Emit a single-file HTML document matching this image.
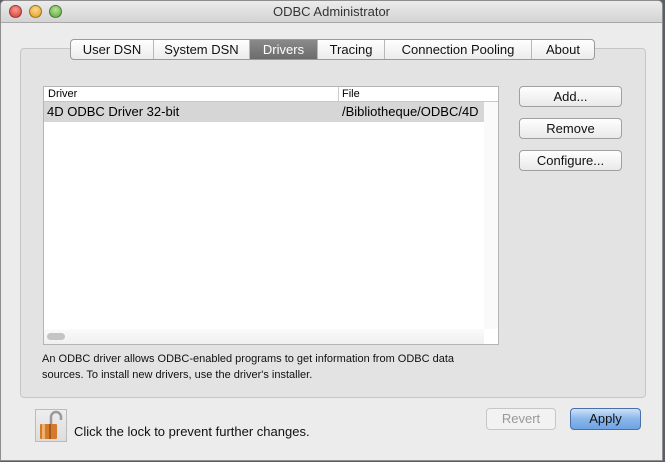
<!DOCTYPE html>
<html><head><style>
*{margin:0;padding:0;box-sizing:border-box}
body{width:665px;height:462px;background:#5a5f66;font-family:"Liberation Sans",sans-serif;position:relative;overflow:hidden}
.win{position:absolute;left:0;top:0;width:663px;height:461px;background:#ececec;border-radius:5px 5px 0 0;border:1px solid #8e8e8e;overflow:hidden}
.title{height:22px;background:linear-gradient(#ececec,#d3d3d3);border-bottom:1px solid #a8a8a8;text-align:center;font-size:13px;line-height:22px;color:#333}
.dot{position:absolute;top:4px;width:13px;height:13px;border-radius:50%;border:1px solid rgba(0,0,0,.35)}
.abs{position:absolute}
.panel{left:19px;top:47px;width:626px;height:350px;background:#e3e3e3;border:1px solid #c6c6c6;border-radius:4px}
.tabs{left:69px;top:38px;height:21px;display:flex;border:1px solid #9a9a9a;border-radius:4px;background:linear-gradient(#fff,#ececec);font-size:13px;overflow:hidden}
.tabs div{text-align:center;line-height:19px;border-right:1px solid #b8b8b8;color:#111}
.tabs div:last-child{border-right:none}
.tabs .sel{background:linear-gradient(#8a8a8a,#6c6c6c);color:#fff}
.tbl{left:42px;top:85px;width:456px;height:259px;background:#fff;border:1px solid #b5b5b5}
.btn{position:absolute;height:21px;border:1px solid #a0a0a0;border-radius:4px;background:linear-gradient(#fff,#e9e9e9);font-size:13px;text-align:center;line-height:19px;color:#111}
</style></head><body>
<div class="win">
<div class="title">ODBC Administrator</div>
<div class="dot" style="left:8px;background:radial-gradient(circle at 50% 35%,#f79a92,#d8372c)"></div>
<div class="dot" style="left:28px;background:radial-gradient(circle at 50% 35%,#fbd98a,#e09a1c)"></div>
<div class="dot" style="left:48px;background:radial-gradient(circle at 50% 35%,#b5e39a,#58a533)"></div>
<div class="abs panel"></div>
<div class="abs tabs"><div style="width:83px">User DSN</div><div style="width:96px">System DSN</div><div class="sel" style="width:68px">Drivers</div><div style="width:67px">Tracing</div><div style="width:147px">Connection Pooling</div><div style="width:62px">About</div></div>
<div class="abs tbl">
 <div style="height:15px;border-bottom:1px solid #c8c8c8;font-size:11px;line-height:14px;position:relative;background:#fff"><span style="position:absolute;left:4px">Driver</span><span style="position:absolute;left:294px;top:0;height:14px;border-left:1px solid #ccc;padding-left:3px">File</span></div>
 <div style="height:20px;background:#d6d6d6;font-size:13px;line-height:20px;position:relative;width:440px"><span style="position:absolute;left:3px">4D ODBC Driver 32-bit</span><span style="position:absolute;left:298px;white-space:nowrap;overflow:hidden;width:142px">/Bibliotheque/ODBC/4D</span></div>
 <div style="position:absolute;right:0;top:15px;width:14px;height:227px;background:#fafafa"></div>
 <div style="position:absolute;left:0;bottom:0;width:440px;height:15px;background:linear-gradient(#fafafa,#f0f0f0)"><div style="position:absolute;left:3px;top:4px;width:18px;height:7px;border-radius:4px;background:#c4c4c4"></div></div>
</div>
<div class="btn" style="left:518px;top:85px;width:103px">Add...</div>
<div class="btn" style="left:518px;top:117px;width:103px">Remove</div>
<div class="btn" style="left:518px;top:149px;width:103px">Configure...</div>
<div class="abs" style="left:41px;top:350px;font-size:11px;line-height:16px;color:#111;width:450px">An ODBC driver allows ODBC-enabled programs to get information from ODBC data sources. To install new drivers, use the driver's installer.</div>
<div class="abs" style="left:34px;top:408px;width:32px;height:33px;border:1px solid #bbb;background:linear-gradient(#eee,#ddd)">
<svg width="30" height="31" viewBox="0 0 30 31"><path d="M15 15 V7 a5 5 0 0 1 10 0 v3" fill="none" stroke="#9a9a9a" stroke-width="2.5"/><rect x="4" y="14" width="17" height="15" rx="1" fill="#d47a2c"/><rect x="6" y="14" width="3" height="15" fill="#f0b070"/><rect x="13" y="14" width="2" height="15" fill="#a8561a"/></svg></div>
<div class="abs" style="left:73px;top:423px;font-size:13px;color:#111">Click the lock to prevent further changes.</div>
<div class="btn" style="left:485px;top:407px;width:70px;height:22px;color:#999;border-color:#c6c6c6;background:#f2f2f2">Revert</div>
<div class="btn" style="left:569px;top:407px;width:71px;height:22px;border-color:#4a6fa8;background:linear-gradient(#cfe2f8,#8ab6ea 50%,#6ea4e4)">Apply</div>
</div>
</body></html>
